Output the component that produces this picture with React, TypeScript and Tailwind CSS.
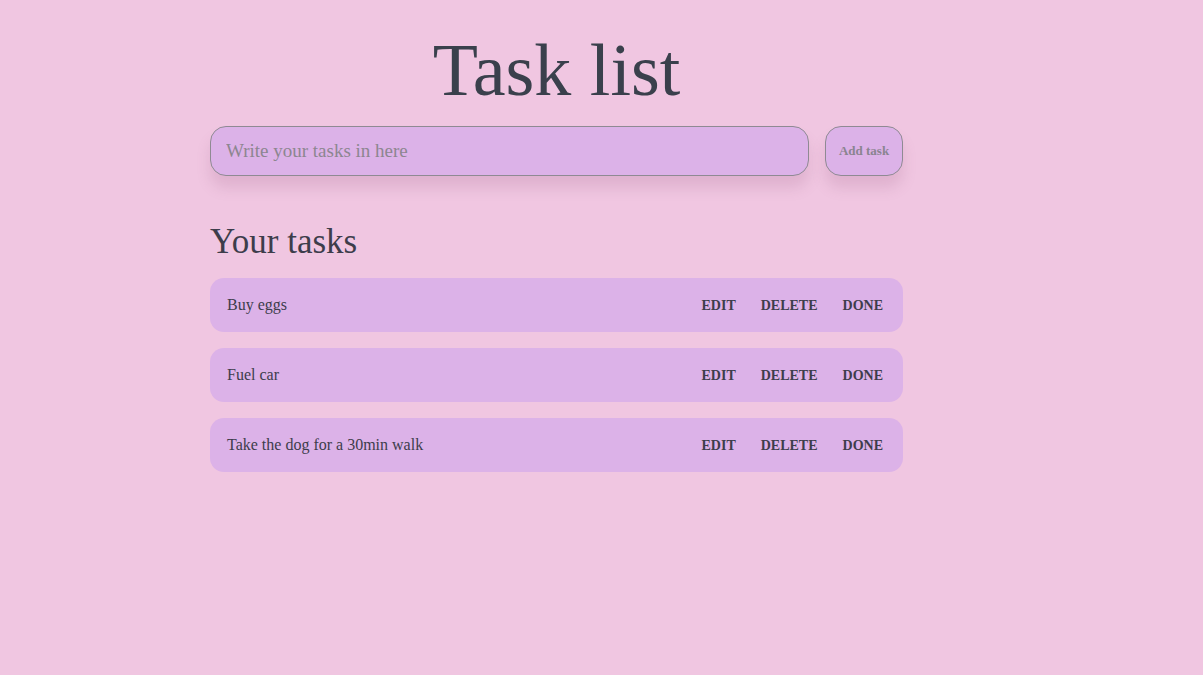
const tasks = ["Buy eggs", "Fuel car", "Take the dog for a 30min walk"];

export default function App() {
  return (
    <div className="min-h-screen bg-[#f0c6e1] font-['Liberation_Serif','DejaVu_Serif',serif] text-[#3d3d4b]">
      <div className="w-[693px] ml-[210px]">
        <h1 className="pt-[28px] text-center text-[74px] leading-[84px] text-[#3a404c]">Task list</h1>
        <form className="mt-[14px] flex gap-[16px]" onSubmit={(e) => e.preventDefault()}>
          <input
            placeholder="Write your tasks in here"
            className="h-[50px] flex-1 rounded-[16px] border border-[#8f8a93] bg-[#dcb2e8] px-[15px] text-[19px] text-[#3d3d4b] shadow-[0_12px_14px_rgba(150,90,130,0.18)] outline-none placeholder:text-[#8c8690]"
          />
          <button className="h-[50px] w-[78px] rounded-[16px] border border-[#8f8a93] bg-[#dcb2e8] text-[13px] font-bold text-[#8a8490] shadow-[0_12px_14px_rgba(150,90,130,0.18)]">
            Add task
          </button>
        </form>
        <h2 className="mt-[44px] text-[35px] leading-[44px]">Your tasks</h2>
        <div className="mt-[14px] flex flex-col gap-[16px]">
          {tasks.map((t) => (
            <div key={t} className="flex h-[54px] items-center rounded-[14px] bg-[#dcb2e8] pl-[17px] pr-[20px]">
              <span className="flex-1 text-[16px]">{t}</span>
              <div className="flex gap-[25px] text-[14px] font-bold">
                <button>EDIT</button>
                <button>DELETE</button>
                <button>DONE</button>
              </div>
            </div>
          ))}
        </div>
      </div>
    </div>
  );
}
